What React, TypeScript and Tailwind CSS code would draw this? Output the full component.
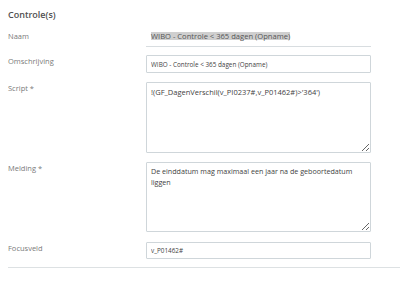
import React from 'react';

const font = { fontFamily: '"Open Sans", sans-serif' };

function Label({ children }: { children: React.ReactNode }) {
  return <div className="w-[146px] shrink-0 pl-2 text-[7.5px] leading-[13px] text-[#7a7a7a]">{children}</div>;
}

export default function App() {
  return (
    <div className="h-[281px] w-[400px] bg-white" style={font}>
      <div className="h-[30px] pt-[9px] pl-2 text-[9px] font-semibold leading-[12px] text-[#505050]">Controle(s)</div>

      {/* Naam */}
      <div className="flex">
        <Label>Naam</Label>
        <div className="w-[225px]">
          <div className="flex h-[16px] items-start pt-[2px] pl-[5px]">
            <span className="bg-[#cfcfcf] text-[7.6px] leading-[8px] text-[#555]">WIBO - Controle &lt; 365 dagen (Opname)</span>
          </div>
          <div className="border-b border-[#d8dde0]" />
        </div>
      </div>

      {/* Omschrijving */}
      <div className="mt-[8px] flex">
        <Label>Omschrijving</Label>
        <input
          readOnly
          value="WIBO - Controle < 365 dagen (Opname)"
          className="h-[18px] w-[225px] rounded-[1px] border border-[#cfd6da] px-[4px] text-[6.35px] text-[#3f3f3f] outline-none"
        />
      </div>

      {/* Script */}
      <div className="mt-[9px] flex">
        <Label>Script *</Label>
        <textarea
          readOnly
          value={"!(GF_DagenVerschil(v_PI0237#,v_P01462#)>'364')"}
          className="h-[71px] w-[225px] rounded-[1px] border border-[#cfd6da] px-[4px] py-[4px] text-[7.5px] leading-[10px] text-[#3f3f3f] outline-none"
        />
      </div>

      {/* Melding */}
      <div className="mt-[9px] flex">
        <Label>Melding *</Label>
        <textarea
          readOnly
          value="De einddatum mag maximaal een jaar na de geboortedatum liggen"
          className="h-[70px] w-[225px] rounded-[1px] border border-[#cfd6da] px-[4px] py-[3px] text-[7.15px] leading-[11px] text-[#3f3f3f] outline-none"
        />
      </div>

      {/* Focusveld */}
      <div className="mt-[10px] flex">
        <Label>Focusveld</Label>
        <input
          readOnly
          value="v_P01462#"
          className="h-[17px] w-[225px] rounded-[1px] border border-[#cfd6da] px-[4px] text-[6.35px] text-[#3f3f3f] outline-none"
        />
      </div>

      <div className="mt-[8px] ml-2 border-b border-[#dde1e3]" />
    </div>
  );
}
